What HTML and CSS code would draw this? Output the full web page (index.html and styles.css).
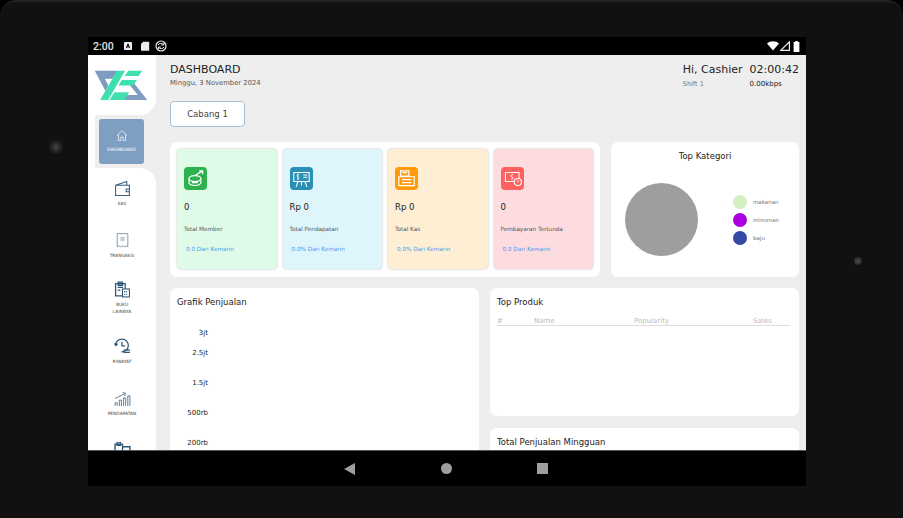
FILE: index.html
```html
<!DOCTYPE html>
<html lang="id">
<head>
    <meta charset="UTF-8">
    <meta name="viewport" content="width=device-width, initial-scale=1.0">
    <title>Dashboard</title>
    <link rel="stylesheet" href="styles.css">
</head>
<body>
    <div class="device">
        <span class="camera"></span>
        <span class="sensor"></span>

        <div class="screen">
            <div class="status-bar">
                <span class="status-time">2:00</span>
                <svg class="status-icon" viewBox="0 0 10 10"><rect x="1" y="1" width="8" height="8" rx="1" fill="#eee"/><path d="M3.4 7.2 5 2.8l1.6 4.4M4 5.800h2" fill="none" stroke="#000" stroke-width="1"/></svg>
                <svg class="status-icon status-icon-sd" viewBox="0 0 10 10"><path d="M3.200.8H8.600a.6.6 0 0 1 .6.6v7.800a.6.6 0 0 1-.6.6H1.600a.6.6 0 0 1-.6-.6V3z" fill="#eee"/></svg>
                <svg class="status-icon status-icon-wide" viewBox="0 0 12 12"><circle cx="6" cy="6" r="5" fill="none" stroke="#eee" stroke-width="1.200"/><path d="M3 5C4 3 7 3 8.500 4.500M8.800 2.500V5H6.300M9 7C8 9 5 9 3.500 7.500M3.300 9.500V7H5.800" fill="none" stroke="#eee" stroke-width="1"/></svg>
                <span class="status-right">
                    <svg class="status-wifi" viewBox="0 0 12 10"><path d="M0 2.600C3.400-.6 8.600-.6 12 2.600L6 9.600z" fill="#fff"/></svg>
                    <svg class="status-signal" viewBox="0 0 10 10"><path d="M9.400 .8V9.400H.8z" fill="none" stroke="#eee" stroke-width="1.200"/></svg>
                    <svg class="status-battery" viewBox="0 0 7 11"><path d="M2.200 0h2.600v1H6.400v10H.6V1h1.600z" fill="#fff"/></svg>
                </span>
            </div>

            <div class="app">
                <nav class="sidebar">
                    <div class="logo-box">
                        <svg class="logo" viewBox="20 120 160 92">
                            <path d="M22 122H90L74 146H52L62 165 54 182z" fill="#7d9cc0"/>
                            <path d="M130 148 178 209H104L114 194H150L122 160z" fill="#7d9cc0"/>
                            <path d="M38 209H62L112 122H88z" fill="#3fe0b0"/>
                            <path d="M122 122H163L152 138H111z" fill="#3fe0b0"/>
                            <path d="M103 150H147L136 166H92z" fill="#3fe0b0"/>
                            <path d="M80 186H124L110 209H66z" fill="#3fe0b0"/>
                        </svg>
                    </div>
                    <div class="nav-active-row">
                        <div class="nav-active">
                            <a class="nav-button">
                                <svg class="nav-home" viewBox="0 0 12 12"><path d="M1 6 6 1.200 11 6M2.400 5V11H4.800V7.600H7.200V11H9.600V5" fill="none" stroke="#fff" stroke-width=".7"/></svg>
                                <span>DASHBOARD</span>
                            </a>
                        </div>
                    </div>
                    <div class="nav-list">
                        <a class="nav-item">
                            <svg class="nav-icon" viewBox="0 0 16 16"><path d="M1.500 5 12 1.500V5M1.500 5H14.500V14.500H1.500zM14.500 8.500H11.500V11H14.500" fill="none" stroke="#3d5f80" stroke-width="1"/></svg>
                            <span>KAS</span>
                        </a>
                        <a class="nav-item">
                            <svg class="nav-icon" viewBox="0 0 16 16"><path d="M3 1.500H13V14L11.500 13 10 14 8 13 6 14 4.500 13 3 14zM6 5.500H10M6 7.500H10" fill="none" stroke="#7f95aa" stroke-width=".9"/></svg>
                            <span>TRANSAKSI</span>
                        </a>
                        <a class="nav-item nav-item-tall">
                            <svg class="nav-icon" viewBox="0 0 16 16"><path d="M1.500 2.500H10.500V14H1.500zM4 1H8V4H4zM3.500 6H8.500M3.500 8.500H6" fill="none" stroke="#2f5575" stroke-width="1.200"/><rect x="8" y="7.500" width="6.500" height="7.500" fill="#fff" stroke="#2f5575"/><path d="M9.500 10H13M9.500 12.500H13" stroke="#2f5575" stroke-dasharray="1 .7"/></svg>
                            <span>BUKU<br>LAINNYA</span>
                        </a>
                        <a class="nav-item">
                            <svg class="nav-icon" viewBox="0 0 16 16"><path d="M1.500 6.500A6 6 0 1 1 7 13M.5 5 1.700 7 3.500 5.500M7.500 3.500V7.500H10.500" fill="none" stroke="#2f5575" stroke-width="1.200"/><path d="M9 11.500H15M9 13.500H15" stroke="#2f5575" stroke-width="1.200"/></svg>
                            <span>RIWAYAT</span>
                        </a>
                        <a class="nav-item">
                            <svg class="nav-icon" viewBox="0 0 16 16"><path d="M1 15V12H3V15M5 15V9.500H7V15M9 15V7.500H11V15M13 15V5.500H15V15M1 8 10 3.500M8 2.500 11 3 9.800 5.500" fill="none" stroke="#4a6a8a" stroke-width=".8"/></svg>
                            <span>PENDAPATAN</span>
                        </a>
                        <a class="nav-item">
                            <svg class="nav-icon" viewBox="0 0 16 16"><path d="M1 2H8V12H1zM3 0H6V3H3zM8 4.500H15V12H8z" fill="none" stroke="#2f5575" stroke-width="1.300"/></svg>
                        </a>
                    </div>
                </nav>

                <main class="main">
                    <header class="header">
                        <div>
                            <h1 class="page-title">DASHBOARD</h1>
                            <p class="page-date">Minggu, 3 November 2024</p>
                        </div>
                        <div class="header-user">
                            <div>
                                <div class="user-name">Hi, Cashier</div>
                                <div class="user-sub">Shift 1</div>
                            </div>
                            <div>
                                <div class="user-name">02:00:42</div>
                                <div class="user-speed">0.00kbps</div>
                            </div>
                        </div>
                    </header>

                    <button class="branch-btn">Cabang 1</button>

                    <section class="row-top">
                        <div class="panel stats">
                            <div class="stat stat-green">
                                <span class="stat-icon">
                                    <svg viewBox="0 0 16 16"><ellipse cx="7.500" cy="8" rx="5" ry="2.500" fill="none" stroke="#fff"/><path d="M2.500 8V12C4 14.500 11 14.500 12.500 12V8M5 11.500H10M8 5 13.500 2M11 1.500H14V4.500" fill="none" stroke="#fff"/></svg>
                                </span>
                                <div class="stat-value">0</div>
                                <div class="stat-label">Total Member</div>
                                <div class="stat-note">0.0 Dari Kemarin</div>
                            </div>
                            <div class="stat stat-blue">
                                <span class="stat-icon">
                                    <svg viewBox="0 0 16 16"><path d="M1.500 3H14.500V10.500H1.500zM5 10.500 3.500 15M11 10.500 12.500 15M8 10.500V14M9.500 5H13M9.500 7H13" fill="none" stroke="#fff" stroke-width=".9"/><path d="M6 4.500C4 4.300 4 6.500 5 6.700S6.500 8.800 4.200 8.500M5 3.800V9.200" fill="none" stroke="#fff" stroke-width=".7"/></svg>
                                </span>
                                <div class="stat-value">Rp 0</div>
                                <div class="stat-label">Total Pendapatan</div>
                                <div class="stat-note">0.0% Dari Kemarin</div>
                            </div>
                            <div class="stat stat-orange">
                                <span class="stat-icon">
                                    <svg viewBox="0 0 16 16"><path d="M3 1.500H10V6H3zM4.500 3H8.500M1.500 6.500H14.500V14H1.500zM4 9H12M4 11.500H12" fill="none" stroke="#fff" stroke-width="1"/></svg>
                                </span>
                                <div class="stat-value">Rp 0</div>
                                <div class="stat-label">Total Kas</div>
                                <div class="stat-note">0.0% Dari Kemarin</div>
                            </div>
                            <div class="stat stat-red">
                                <span class="stat-icon">
                                    <svg viewBox="0 0 16 16"><path d="M2 3H13.500V10.500H2z" fill="none" stroke="#fff" stroke-width=".9"/><path d="M8.500 4.800C6.500 4.500 6 6.500 7.500 6.800S9 8.800 6.800 8.500" fill="none" stroke="#fff" stroke-width=".8"/><circle cx="12.500" cy="11" r="3" fill="#ff6161" stroke="#fff" stroke-width=".9"/><path d="M12.500 9.500V11.500" stroke="#fff" stroke-width=".8"/></svg>
                                </span>
                                <div class="stat-value">0</div>
                                <div class="stat-label">Pembayaran Tertunda</div>
                                <div class="stat-note">0.0 Dari Kemarin</div>
                            </div>
                        </div>

                        <div class="panel category">
                            <h2 class="category-title">Top Kategori</h2>
                            <div class="category-body">
                                <div class="pie"></div>
                                <ul class="legend">
                                    <li><span class="dot dot-green"></span>makanan</li>
                                    <li><span class="dot dot-purple"></span>minuman</li>
                                    <li><span class="dot dot-blue"></span>baju</li>
                                </ul>
                            </div>
                        </div>
                    </section>

                    <section class="row-bottom">
                        <div class="panel sales-chart">
                            <h2 class="panel-title">Grafik Penjualan</h2>
                            <ul class="axis">
                                <li>3jt</li>
                                <li>2.5jt</li>
                                <li>1.5jt</li>
                                <li>500rb</li>
                                <li>200rb</li>
                            </ul>
                        </div>
                        <div class="side-column">
                            <div class="panel products">
                                <h2 class="panel-title">Top Produk</h2>
                                <div class="table-head">
                                    <span>#</span>
                                    <span>Name</span>
                                    <span>Popularity</span>
                                    <span>Sales</span>
                                </div>
                            </div>
                            <div class="panel weekly">
                                <h2 class="panel-title">Total Penjualan Mingguan</h2>
                            </div>
                        </div>
                    </section>
                </main>
            </div>

            <div class="nav-bar">
                <span class="nav-back"></span>
                <span class="nav-circle"></span>
                <span class="nav-square"></span>
            </div>
        </div>
    </div>
</body>
</html>
```

FILE: styles.css
```css
* {
    box-sizing: border-box;
}

body {
    margin: 0;
    background: #000;
    font-family: "DejaVu Sans", sans-serif;
    overflow: hidden;
}

h1, h2, p, ul {
    margin: 0;
    padding: 0;
    font-weight: normal;
}

ul {
    list-style: none;
}

/* Tablet frame */
.device {
    position: relative;
    width: 903px;
    height: 518px;
    padding: 35px 97px 32px 88px;
    background: #111;
    border-top: 2px solid #222;
    border-radius: 16px 16px 0 0;
}

.camera {
    position: absolute;
    top: 138px;
    left: 49px;
    width: 14px;
    height: 14px;
    border-radius: 50%;
    background: radial-gradient(circle, #4a4a4a 0, #2a2a2a 35%, #0c0c0c 100%);
}

.sensor {
    position: absolute;
    top: 255px;
    left: 854px;
    width: 8px;
    height: 8px;
    border-radius: 50%;
    background: radial-gradient(circle, #4c4c4c 0, #1a1a1a 100%);
}

.screen {
    display: flex;
    flex-direction: column;
    height: 449px;
    background: #000;
}

/* Status bar */
.status-bar {
    display: flex;
    align-items: center;
    flex: none;
    height: 18px;
    padding: 0 0 0 5px;
    color: #e4e4e4;
    font-family: Roboto, sans-serif;
    font-size: 10.500px;
    font-weight: 500;
}

.status-time {
    width: 30px;
}

.status-icon {
    width: 10px;
    height: 10px;
    margin-right: 7px;
}

.status-icon-sd {
    margin-right: 5px;
}

.status-icon-wide {
    width: 12px;
    height: 12px;
}

.status-right {
    display: flex;
    align-items: center;
    gap: 1px;
    margin-left: auto;
    padding-right: 6px;
}

.status-wifi {
    width: 12px;
    height: 10px;
}

.status-signal {
    width: 10px;
    height: 10px;
}

.status-battery {
    width: 7px;
    height: 11px;
    margin-left: 2px;
}

/* App */
.app {
    display: flex;
    flex: 1;
    min-height: 0;
    overflow: hidden;
    background: #eeeeee;
}

.sidebar {
    flex: none;
    width: 68px;
    overflow: hidden;
}

.logo-box {
    display: flex;
    justify-content: center;
    height: 60px;
    padding: 15px 8px 0 6px;
    background: #fff;
    border-radius: 0 0 16px 0;
}

.logo {
    width: 54px;
    height: 31px;
}

.nav-active-row {
    padding-left: 7px;
    background: linear-gradient(to right, #fff 7px, transparent 7px);
}

.nav-active {
    height: 53px;
    padding: 4px 12px 0 4px;
    background: #eeeeee;
    border-radius: 8px 0 0 8px;
}

.nav-button {
    display: flex;
    flex-direction: column;
    align-items: center;
    width: 45px;
    height: 45px;
    padding-top: 10px;
    background: #7f9fc2;
    border-radius: 3px;
    color: #fff;
    font-size: 4.500px;
}

.nav-home {
    width: 12px;
    height: 13px;
    margin-bottom: 5px;
}

.nav-list {
    display: flex;
    flex-direction: column;
    gap: 17px;
    height: 300px;
    padding: 12px 0 0 0;
    background: #fff;
    border-radius: 0 16px 0 0;
}

.nav-item {
    display: flex;
    flex: none;
    flex-direction: column;
    align-items: center;
    min-height: 35px;
    color: #444;
    font-size: 4.400px;
    line-height: 7px;
    text-align: center;
}

.nav-item-tall {
    min-height: 40px;
    margin-top: -3px;
}

.nav-icon {
    width: 17px;
    height: 17px;
    margin-bottom: 3px;
}

/* Main area */
.main {
    flex: 1;
    min-width: 0;
    padding: 0 7px 0 14px;
    overflow: hidden;
}

.header {
    display: flex;
    justify-content: space-between;
    padding-top: 8px;
}

.page-title {
    font-size: 11px;
    line-height: 14px;
    color: #222;
}

.page-date {
    margin-top: 2px;
    font-size: 6.800px;
    line-height: 9px;
    color: #555;
}

.header-user {
    display: flex;
    gap: 7px;
}

.user-name {
    font-size: 11px;
    line-height: 14px;
    color: #222;
}

.user-sub {
    margin-top: 3px;
    font-size: 6.500px;
    line-height: 9px;
    color: #777;
}

.user-speed {
    margin-top: 3px;
    font-size: 7px;
    line-height: 9px;
    color: #222;
}

.branch-btn {
    display: block;
    width: 75px;
    height: 26px;
    margin-top: 12px;
    background: #fff;
    border: 1px solid #a9bdd6;
    border-radius: 4px;
    color: #444;
    font-family: inherit;
    font-size: 8.500px;
}

.panel {
    background: #fff;
    border-radius: 7px;
}

.row-top {
    display: flex;
    gap: 11px;
    margin-top: 15px;
}

.stats {
    display: flex;
    gap: 6px;
    width: 430px;
    height: 135px;
    padding: 7px 7px 8px;
}

.stat {
    flex: 1;
    padding: 18px 7px 0;
    border-radius: 4px;
    box-shadow: 0 0 2px rgba(0, 0, 0, 0.3);
}

.stat-green { background: #e0fae8; }
.stat-blue { background: #dff5fc; }
.stat-orange { background: #feeed4; }
.stat-red { background: #fcdcdf; }

.stat-icon {
    display: flex;
    align-items: center;
    justify-content: center;
    width: 23px;
    height: 23px;
    border-radius: 4px;
}

.stat-icon svg {
    width: 19px;
    height: 19px;
}

.stat-green .stat-icon { background: #2bb24c; }
.stat-blue .stat-icon { background: #2a8fb5; }
.stat-orange .stat-icon { background: #ff9a0a; }
.stat-red .stat-icon { background: #ff6161; }

.stat-value {
    margin-top: 11px;
    font-size: 8.500px;
    line-height: 12px;
    color: #222;
}

.stat-label {
    margin-top: 12px;
    font-size: 5.700px;
    line-height: 9px;
    color: #555;
}

.stat-note {
    margin-top: 11px;
    padding-left: 2px;
    font-size: 5.700px;
    line-height: 9px;
    color: #4a9bf0;
}

/* Top kategori */
.category {
    width: 188px;
    height: 135px;
    padding-top: 8px;
}

.category-title {
    font-size: 8.500px;
    line-height: 12px;
    color: #222;
    text-align: center;
}

.category-body {
    display: flex;
    align-items: center;
    margin-top: 21px;
    padding-left: 14px;
}

.pie {
    width: 73px;
    height: 73px;
    border-radius: 50%;
    background: #9e9e9e;
}

.legend {
    display: flex;
    flex-direction: column;
    gap: 4px;
    margin-left: 35px;
    font-size: 5.500px;
    color: #777;
}

.legend li {
    display: flex;
    align-items: center;
    gap: 6px;
}

.dot {
    width: 14px;
    height: 14px;
    border-radius: 50%;
}

.dot-green { background: #d4f0c0; }
.dot-purple { background: #a800e0; }
.dot-blue { background: #3448a8; }

/* Bagian bawah */
.row-bottom {
    display: flex;
    gap: 11px;
    margin-top: 11px;
}

.sales-chart {
    width: 309px;
    height: 300px;
    padding: 8px 7px;
}

.panel-title {
    font-size: 8.500px;
    line-height: 12px;
    color: #222;
}

.axis {
    width: 31px;
    margin-top: 20px;
    font-size: 7px;
    line-height: 10px;
    color: #222;
    text-align: right;
}

.axis li {
    height: 30px;
}

.axis li:first-child {
    height: 20px;
}

.side-column {
    display: flex;
    flex-direction: column;
    gap: 12px;
    width: 309px;
}

.products {
    height: 128px;
    padding: 8px 9px 0 7px;
}

.table-head {
    display: grid;
    grid-template-columns: 37px 100px 119px 1fr;
    margin-top: 9px;
    height: 9px;
    border-bottom: 1px solid #ddd;
    font-size: 7px;
    line-height: 9px;
    color: #bbb;
}

.weekly {
    height: 120px;
    padding: 8px 7px;
}

/* Android nav bar */
.nav-bar {
    position: relative;
    display: flex;
    flex: none;
    align-items: center;
    height: 36px;
    background: #000;
    border-top: 1px solid #555;
}

.nav-back {
    position: absolute;
    left: 256px;
    top: 12px;
    border-top: 6px solid transparent;
    border-bottom: 6px solid transparent;
    border-right: 11px solid #9e9e9e;
}

.nav-circle {
    position: absolute;
    left: 353px;
    top: 12px;
    width: 11px;
    height: 11px;
    border-radius: 50%;
    background: #9e9e9e;
}

.nav-square {
    position: absolute;
    left: 449px;
    top: 12px;
    width: 11px;
    height: 11px;
    background: #9e9e9e;
}
```
